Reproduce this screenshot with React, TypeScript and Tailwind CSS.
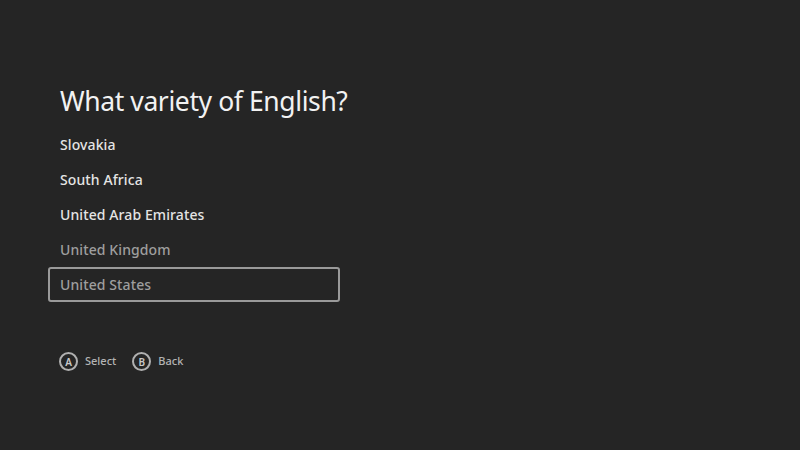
const items = [
  { label: "Slovakia", dim: false },
  { label: "South Africa", dim: false },
  { label: "United Arab Emirates", dim: false },
  { label: "United Kingdom", dim: true },
  { label: "United States", dim: true, selected: true },
];

function ButtonHint({ glyph, label }: { glyph: string; label: string }) {
  return (
    <div className="flex items-center gap-[7px]">
      <div className="flex h-[19px] w-[19px] items-center justify-center rounded-full border-2 border-[#b0b0b0] text-[10px] font-semibold leading-none text-[#c8c8c8]">
        {glyph}
      </div>
      <span className="text-[11px] font-medium text-[#b4b4b4]">{label}</span>
    </div>
  );
}

export default function App() {
  return (
    <div
      className="h-[450px] w-[800px] overflow-hidden bg-[#252525] pl-[48px] pt-[84px]"
      style={{ fontFamily: '"Noto Sans", "Open Sans", sans-serif' }}
    >
      <h1 className="pl-[12px] text-[26.5px] font-normal leading-[34px] tracking-[-0.4px] text-[#f2f2f2]">
        What variety of English?
      </h1>
      <ul className="mt-[9px] flex flex-col">
        {items.map((it) => (
          <li
            key={it.label}
            className={
              "flex h-[35px] w-[292px] items-center rounded-[3px] pl-[10px] text-[14px] font-medium tracking-[0.1px] " +
              (it.selected ? "border-2 border-[#9a9a9a] " : "border-2 border-transparent ") +
              (it.dim ? "text-[#9e9e9e]" : "text-[#e4e4e4]")
            }
          >
            {it.label}
          </li>
        ))}
      </ul>
      <div className="mt-[50px] flex gap-[16px] pl-[11px]">
        <ButtonHint glyph="A" label="Select" />
        <ButtonHint glyph="B" label="Back" />
      </div>
    </div>
  );
}
